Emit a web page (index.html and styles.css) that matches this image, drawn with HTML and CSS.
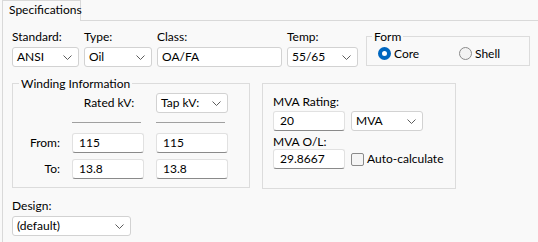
FILE: index.html
```html
<!DOCTYPE html>
<html lang="en">
<head>
  <meta charset="UTF-8">
  <title>Specifications</title>
  <link rel="stylesheet" href="styles.css">
</head>
<body>

<div class="tabs">
  <div class="tab">Specifications</div>
  <div class="tab-fill"></div>
</div>

<div class="panel">
  <div class="top-row">
    <div class="field">
      <div class="lbl">Standard:</div>
      <div class="combo">ANSI<svg class="chev" width="9" height="5"><polyline points="0.5,0.5 4.5,4.5 8.5,0.5"/></svg></div>
    </div>
    <div class="field">
      <div class="lbl">Type:</div>
      <div class="combo">Oil<svg class="chev" width="9" height="5"><polyline points="0.5,0.5 4.5,4.5 8.5,0.5"/></svg></div>
    </div>
    <div class="field">
      <div class="lbl">Class:</div>
      <div class="combo">OA/FA</div>
    </div>
    <div class="field">
      <div class="lbl">Temp:</div>
      <div class="combo">55/65<svg class="chev" width="9" height="5"><polyline points="0.5,0.5 4.5,4.5 8.5,0.5"/></svg></div>
    </div>
    <fieldset class="group form-group">
      <legend>Form</legend>
      <div class="radios">
        <div class="radio-item core"><span class="radio checked"></span>Core</div>
        <div class="radio-item"><span class="radio"></span>Shell</div>
      </div>
    </fieldset>
  </div>

  <div class="mid-row">
    <fieldset class="group winding">
      <legend>Winding Information</legend>
      <div class="wind-row wind-head">
        <span></span>
        <span class="col-title">Rated kV:</span>
        <div class="combo">Tap kV:<svg class="chev" width="9" height="5"><polyline points="0.5,0.5 4.5,4.5 8.5,0.5"/></svg></div>
      </div>
      <div class="wind-row wind-rule">
        <span></span>
        <span class="rule"></span>
        <span class="rule"></span>
      </div>
      <div class="wind-row wind-first">
        <span class="row-lbl">From:</span>
        <div class="textbox">115</div>
        <div class="textbox">115</div>
      </div>
      <div class="wind-row wind-next">
        <span class="row-lbl">To:</span>
        <div class="textbox">13.8</div>
        <div class="textbox">13.8</div>
      </div>
    </fieldset>

    <div class="group mva">
      <div class="lbl">MVA Rating:</div>
      <div class="mva-row">
        <div class="textbox">20</div>
        <div class="combo">MVA<svg class="chev" width="9" height="5"><polyline points="0.5,0.5 4.5,4.5 8.5,0.5"/></svg></div>
      </div>
      <div class="lbl mva-ol">MVA O/L:</div>
      <div class="mva-row">
        <div class="textbox">29.8667</div>
        <div class="check-item"><span class="checkbox"></span>Auto-calculate</div>
      </div>
    </div>
  </div>

  <div class="field design">
    <div class="lbl">Design:</div>
    <div class="combo">(default)<svg class="chev" width="9" height="5"><polyline points="0.5,0.5 4.5,4.5 8.5,0.5"/></svg></div>
  </div>
</div>

</body>
</html>
```

FILE: styles.css
```css
body {
  margin: 0;
  background-color: #f9f9f9;
  color: #000000;
  font-family: 'Lato', 'Liberation Sans', sans-serif;
  font-size: 12px;
  line-height: 14px;
}

/* Tab strip */
.tabs {
  display: flex;
  padding-left: 2px;
}

.tab {
  width: 79px;
  height: 21px;
  box-sizing: border-box;
  padding: 2px 0 0 6px;
  border: 1px solid #d9d9d9;
  border-bottom: none;
  background-color: #f9f9f9;
}

.tab-fill {
  flex: 1;
  border-bottom: 1px solid #d9d9d9;
}

.panel {
  margin-left: 2px;
  border-left: 1px solid #d9d9d9;
  padding: 9px 0 0 9px;
  height: calc(100vh - 21px);
  box-sizing: border-box;
}

/* Controls */
.lbl {
  height: 14px;
  margin-bottom: 3px;
}

.combo {
  display: flex;
  align-items: center;
  justify-content: space-between;
  height: 20px;
  box-sizing: border-box;
  padding: 0 6px 0 4px;
  border: 1px solid #d2d2d2;
  border-radius: 3px;
  background-color: #ffffff;
}

.chev {
  fill: none;
  stroke: #5c5c5c;
  stroke-width: 1;
}

.textbox {
  height: 20px;
  box-sizing: border-box;
  padding: 2px 0 0 6px;
  border: 1px solid #e1e1e1;
  border-bottom-color: #8a8a8a;
  border-radius: 3px;
  background-color: #ffffff;
}

.group {
  margin: 0;
  min-width: 0;
  border: 1px solid #dcdcdc;
  box-sizing: border-box;
}

.group legend {
  padding: 0 2px;
  line-height: 13px;
}

/* First row */
.top-row {
  display: grid;
  grid-template-columns: 67px 68px 125px 71px 167px;
  column-gap: 5px;
  align-items: start;
}

.form-group {
  margin-left: 3px;
  padding: 4px 0 5px 11px;
}

.form-group legend {
  margin-left: -6px;
}

.radios {
  display: flex;
  height: 13px;
}

.radio-item {
  display: flex;
  align-items: center;
  gap: 3px;
}

.radio-item.core {
  width: 81px;
}

.radio {
  width: 13px;
  height: 13px;
  box-sizing: border-box;
  border-radius: 50%;
  border: 1px solid #8a8a8a;
  background-color: #f3f3f3;
}

.radio.checked {
  border: 4px solid #0067c0;
  background-color: #ffffff;
}

/* Second row */
.mid-row {
  display: flex;
  align-items: flex-start;
  margin-top: 10px;
}

.winding {
  width: 238px;
  padding: 3px 6px 8px 6px;
}

.wind-row {
  display: grid;
  grid-template-columns: 41px 72px 72px;
  column-gap: 12px;
  align-items: center;
}

.wind-head {
  height: 20px;
}

.col-title {
  text-align: center;
  padding-left: 2px;
}

.wind-rule {
  margin-top: 9px;
}

.rule {
  width: 69px;
  border-top: 1px solid #a0a0a0;
}

.wind-first {
  margin-top: 10px;
}

.wind-next {
  margin-top: 6px;
}

.row-lbl {
  text-align: right;
}

.mva {
  width: 194px;
  height: 106px;
  margin: 6px 0 0 12px;
  padding: 11px 0 0 10px;
}

.mva .lbl {
  margin-bottom: 2px;
}

.mva .lbl.mva-ol {
  margin: 4px 0 0;
}

.mva-row {
  display: flex;
  align-items: center;
  gap: 6px;
}

.mva-row .textbox,
.mva-row .combo {
  width: 72px;
}

.check-item {
  display: flex;
  align-items: center;
  gap: 3px;
}

.checkbox {
  width: 13px;
  height: 13px;
  box-sizing: border-box;
  border: 1px solid #8a8a8a;
  border-radius: 2px;
  background-color: #f5f5f5;
}

/* Design */
.design {
  margin-top: 10px;
  width: 119px;
}
```
